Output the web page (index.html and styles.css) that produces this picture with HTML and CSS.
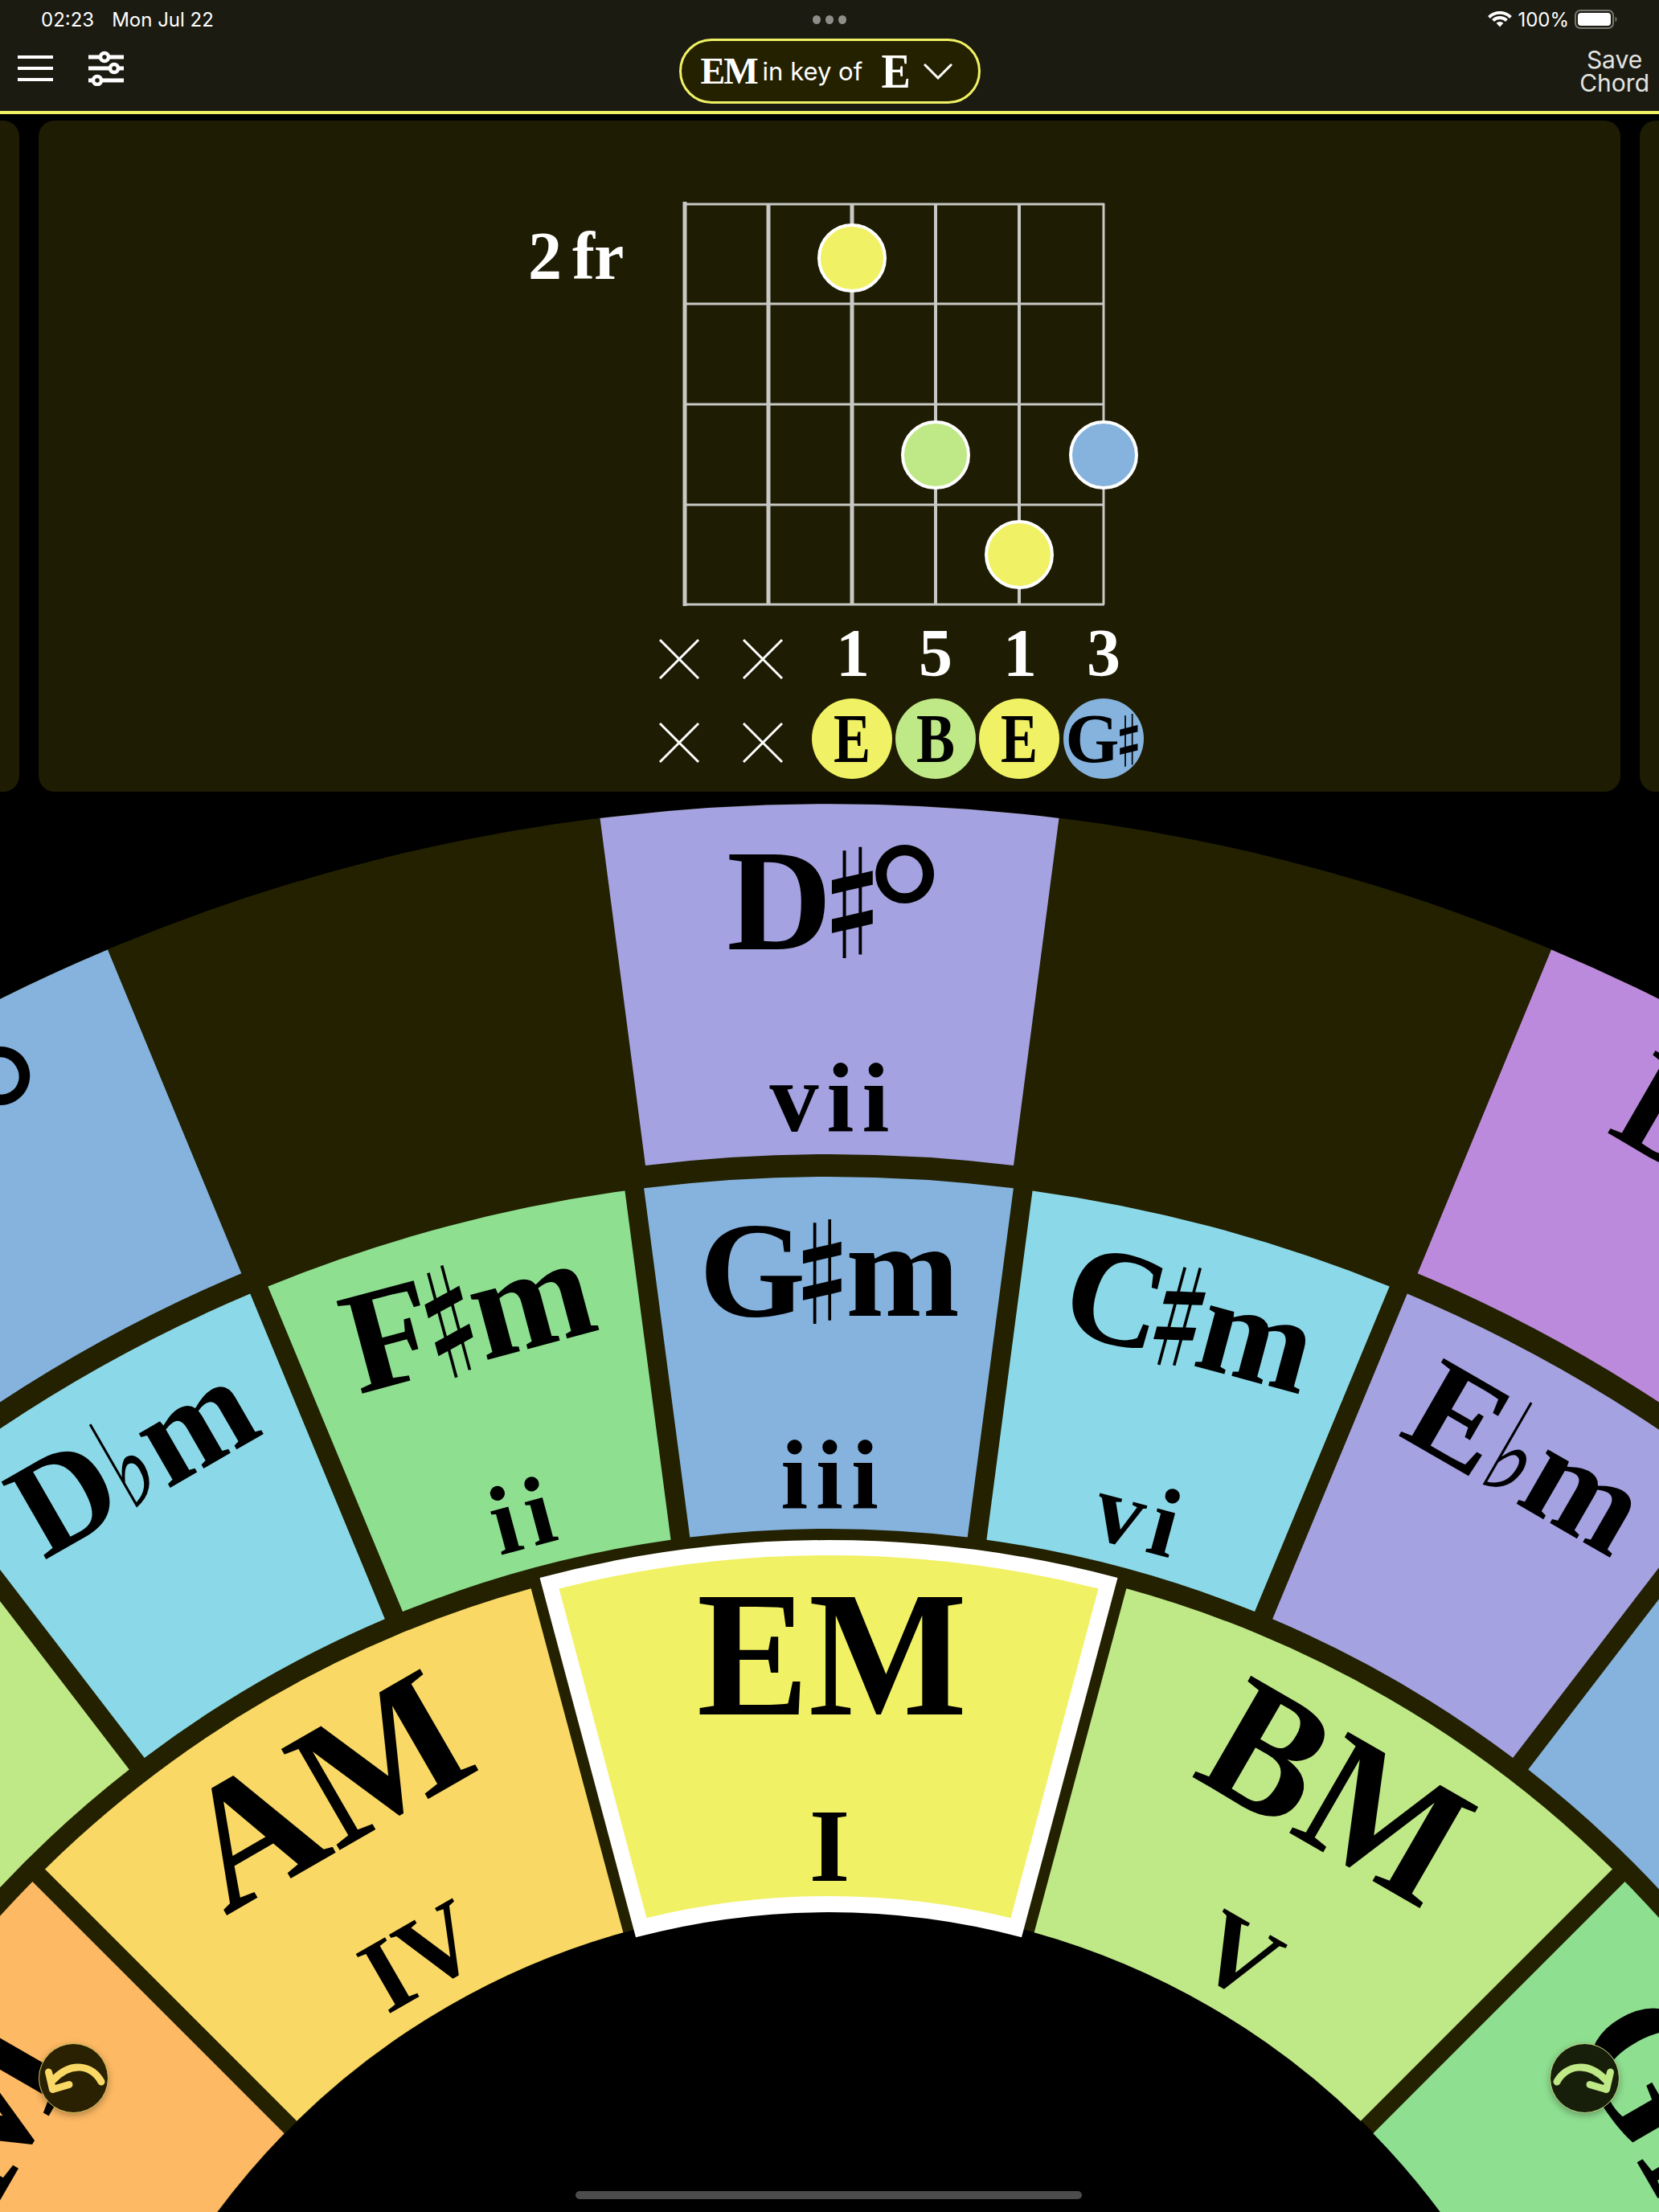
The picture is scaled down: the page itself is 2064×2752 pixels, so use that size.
FILE: index.html
```html
<!DOCTYPE html>
<html lang="en">
<head>
    <meta charset="UTF-8" />
    <meta name="viewport" content="width=device-width, initial-scale=1" />
    <title>Chord Wheel</title>
    <link rel="stylesheet" href="styles.css">
</head>
<body>

<div class="screen">

    <header class="topbar">
        <div class="status">
            <div class="status-left"><span>02:23</span><span>Mon Jul 22</span></div>
            <div class="dots"><i></i><i></i><i></i></div>
            <div class="status-right">
                <svg class="wifi" width="30" height="20" viewBox="0 0 30 20">
                    <path d="M1.5 7.5 A19 19 0 0 1 28.5 7.5" />
                    <path d="M6.5 11.5 A12 12 0 0 1 23.5 11.5" />
                    <path d="M15 19.5 L10.6 14.8 A6 6 0 0 1 19.4 14.8 Z" class="wifi-tip" />
                </svg>
                <span>100%</span>
                <svg class="battery" width="54" height="24" viewBox="0 0 54 24">
                    <rect x="1" y="1" width="47" height="22" rx="6" class="batt-shell" />
                    <rect x="4" y="4" width="41" height="16" rx="4" class="batt-level" />
                    <path d="M50.5 8.5 A4 4 0 0 1 50.5 15.5 Z" class="batt-nub" />
                </svg>
            </div>
        </div>
        <div class="nav">
            <div class="nav-icons">
                <svg width="44" height="44" viewBox="0 0 44 44" class="icon">
                    <path d="M0 8 H44 M0 22 H44 M0 36 H44" />
                </svg>
                <svg width="44" height="44" viewBox="0 0 44 44" class="icon">
                    <path class="thick" d="M0 8 H44 M0 22 H44 M0 37 H44" />
                    <circle cx="20" cy="8" r="5" />
                    <circle cx="32" cy="22" r="5" />
                    <circle cx="11" cy="37" r="5" />
                </svg>
            </div>
            <div class="key-pill">
                <span class="pill-chord">EM</span>
                <span class="pill-label">in key of</span>
                <span class="pill-key">E</span>
                <svg width="36" height="20" viewBox="0 0 36 20" class="pill-arrow">
                    <path d="M1 1 L18 18 L35 1" />
                </svg>
            </div>
            <div class="save">Save<br>Chord</div>
        </div>
    </header>

    <div class="carousel">
        <div class="card"></div>
        <div class="card">
            <svg class="diagram" width="1968" height="835" viewBox="48 150 1968 835">
                <text x="657" y="347" class="fret">2 fr</text>

                <path class="str s1" d="M852 251 V754" />
                <path class="str s1" d="M956 253 V752" />
                <path class="str s1" d="M1060 253 V752" />
                <path class="str s2" d="M1164 253 V752" />
                <path class="str s2" d="M1268 253 V752" />
                <path class="str s3" d="M1373 253 V752" />
                <path class="str s3" d="M850 254 H1374 M850 378 H1374 M850 503 H1374 M850 628 H1374 M850 752 H1374" />

                <circle cx="1060" cy="321" r="41" class="dot yellow" />
                <circle cx="1164" cy="566" r="41" class="dot lime" />
                <circle cx="1373" cy="566" r="41" class="dot blue" />
                <circle cx="1268" cy="690" r="41" class="dot yellow" />

                <path class="mute" d="M821 796 L869 844 M869 796 L821 844" />
                <path class="mute" d="M925 796 L973 844 M973 796 L925 844" />
                <path class="mute" d="M821 900 L869 948 M869 900 L821 948" />
                <path class="mute" d="M925 900 L973 948 M973 900 L925 948" />

                <text x="1061" y="841" class="degree">1</text>
                <text x="1164" y="841" class="degree">5</text>
                <text x="1269" y="841" class="degree">1</text>
                <text x="1373" y="841" class="degree">3</text>

                <circle cx="1060" cy="919" r="50" class="yellow" />
                <circle cx="1164" cy="919" r="50" class="lime" />
                <circle cx="1268" cy="919" r="50" class="yellow" />
                <circle cx="1373" cy="919" r="50" class="blue" />
                <text x="1060" y="948" class="note" textLength="46" lengthAdjust="spacingAndGlyphs">E</text>
                <text x="1164" y="948" class="note" textLength="48" lengthAdjust="spacingAndGlyphs">B</text>
                <text x="1268" y="948" class="note" textLength="46" lengthAdjust="spacingAndGlyphs">E</text>
                <text x="1376" y="948" class="note">G<tspan class="acc" dx="-10" textLength="44" lengthAdjust="spacingAndGlyphs">♯</tspan></text>
            </svg>
        </div>
        <div class="card"></div>
    </div>

    <svg class="wheel" width="2064" height="1767" viewBox="0 985 2064 1767">
        <defs>
            <path id="cell3" d="M-285.5 -2298 A2316 2316 0 0 1 285.5 -2298 L229 -1866 A1880 1880 0 0 0 -229 -1866 Z" />
            <path id="cell2" d="M-229.9 -1837.7 A1852 1852 0 0 1 229.9 -1837.7 L172.7 -1403.4 A1414 1414 0 0 0 -172.7 -1403.4 Z" />
            <path id="cell1" d="M-349.1 -1345.4 A1390 1390 0 0 1 349.1 -1345.4 L234.5 -917.5 A947 947 0 0 0 -234.5 -917.5 Z" />
        </defs>
        <g transform="translate(1032 3316)">
            <circle r="2316" class="ground" />
            <circle r="947" class="hole" />

            <!-- outer ring, every other slot is empty -->
            <use href="#cell3" class="purple" />
            <use href="#cell3" transform="rotate(-29.9)" class="blue" />
            <use href="#cell3" transform="rotate(29.9)" class="pink" />
        </g>
        <g transform="translate(1031 3316)">
            <!-- middle ring -->
            <use href="#cell2" class="blue" />
            <use href="#cell2" transform="rotate(-15)" class="green" />
            <use href="#cell2" transform="rotate(15)" class="cyan" />
            <use href="#cell2" transform="rotate(-30)" class="cyan" />
            <use href="#cell2" transform="rotate(30)" class="purple" />
            <use href="#cell2" transform="rotate(-45)" class="lime" />
            <use href="#cell2" transform="rotate(45)" class="blue" />

            <!-- inner ring -->
            <use href="#cell1" transform="rotate(-30)" class="amber" />
            <use href="#cell1" transform="rotate(30)" class="lime" />
            <use href="#cell1" transform="rotate(-60)" class="orange" />
            <use href="#cell1" transform="rotate(60)" class="green" />

            <!-- selected chord -->
            <path class="white" d="M-359.5 -1353 A1400 1400 0 0 1 359.5 -1353 L240 -905.7 A937 937 0 0 0 -240 -905.7 Z" />
            <path class="yellow" d="M-335.5 -1339.6 A1381 1381 0 0 1 335.5 -1339.6 L226.5 -929.8 A957 957 0 0 0 -226.5 -929.8 Z" />
        </g>
        <g transform="translate(1032 3316)">
            <text x="7" y="-2135" class="dim">D<tspan class="acc" dx="-24" textLength="100" lengthAdjust="spacingAndGlyphs">♯</tspan><tspan class="circ" dx="-33" dy="30">°</tspan></text>
            <text y="-1909" class="num">vii</text>
            <g transform="rotate(-30)"><text x="-70" y="-2135" class="dim">G<tspan class="circ" x="96" dy="30">°</tspan></text></g>
            <g transform="rotate(30)"><text x="17" y="-2135" class="dim">D<tspan class="acc" dx="-24" textLength="100" lengthAdjust="spacingAndGlyphs">♯</tspan><tspan class="circ" dx="-33" dy="30">°</tspan></text></g>

            <text y="-1679" class="minor">G<tspan class="acc" dx="-26" textLength="94" lengthAdjust="spacingAndGlyphs">♯</tspan><tspan dx="-18">m</tspan></text>
            <text y="-1440" class="num">iii</text>
            <g transform="rotate(-15)">
                <text y="-1679" class="minor big">F<tspan class="acc" dx="-26" textLength="94" lengthAdjust="spacingAndGlyphs">♯</tspan><tspan dx="-18">m</tspan></text>
                <text y="-1440" class="num">ii</text>
            </g>
            <g transform="rotate(15)">
                <text y="-1679" class="minor">C<tspan class="acc" dx="-26" textLength="94" lengthAdjust="spacingAndGlyphs">♯</tspan><tspan dx="-18">m</tspan></text>
                <text y="-1440" class="num">vi</text>
            </g>
            <g transform="rotate(-30)"><text y="-1679" class="minor">D<tspan class="flat" textLength="54" lengthAdjust="spacingAndGlyphs">♭</tspan>m</text></g>
            <g transform="rotate(30)"><text y="-1679" class="minor">E<tspan class="flat" textLength="54" lengthAdjust="spacingAndGlyphs">♭</tspan>m</text></g>

            <text y="-1183" class="major">EM</text>
            <text y="-976" class="roman">I</text>
            <g transform="rotate(-30)">
                <text y="-1183" class="major wide">AM</text>
                <text y="-976" class="roman">IV</text>
            </g>
            <g transform="rotate(30)">
                <text y="-1183" class="major">BM</text>
                <text y="-976" class="roman">V</text>
            </g>
            <g transform="rotate(-60)"><text y="-1183" class="major wide">DM</text></g>
            <g transform="rotate(60)"><text x="-25" y="-1183" class="major wide">GM</text></g>
        </g>
    </svg>

    <button class="turn turn-left">
        <svg width="86" height="86" viewBox="0 0 86 86">
            <path d="M77 47 C66 27 40 20 17 45" />
            <path d="M11.5 35 L16.5 56.5 L37 50.5" />
        </svg>
    </button>
    <button class="turn turn-right">
        <svg width="86" height="86" viewBox="0 0 86 86">
            <path d="M8 47 C19 27 46 20 69 45" />
            <path d="M74.5 35 L69.5 56.5 L49 50.5" />
        </svg>
    </button>

    <div class="home-bar"></div>
</div>

</body>
</html>
```

FILE: styles.css
```css
body {
    margin: 0;
    background-color: #000;
}
.screen {
    position: relative;
    width: 2064px;
    height: 2752px;
    overflow: hidden;
    display: flex;
    flex-direction: column;
    background-color: #000;
    font-family: Inter, "Liberation Sans", sans-serif;
    color: #fff;
}

/* top bar */
.topbar {
    box-sizing: border-box;
    height: 142px;
    background-color: #1b1b11;
    border-bottom: 4px solid #f1f165;
}
.status {
    height: 48px;
    padding: 0 51px;
    display: grid;
    grid-template-columns: 1fr auto 1fr;
    align-items: center;
    font-size: 24px;
}
.status-left {
    display: flex;
    gap: 22px;
}
.status-right {
    display: flex;
    justify-content: flex-end;
    align-items: center;
    gap: 7px;
}
.dots {
    display: flex;
    gap: 6px;
}
.dots i {
    width: 10px;
    height: 11px;
    border-radius: 50%;
    background-color: #8e8e88;
}
.wifi path {
    fill: none;
    stroke: #fff;
    stroke-width: 4;
}
.wifi .wifi-tip {
    fill: #fff;
    stroke: none;
}
.batt-shell {
    fill: none;
    stroke: #77776f;
    stroke-width: 2;
}
.batt-level {
    fill: #fff;
}
.batt-nub {
    fill: #77776f;
}
.nav {
    display: grid;
    grid-template-columns: 1fr auto 1fr;
    align-items: start;
}
.nav-icons {
    display: flex;
    gap: 44px;
    padding: 15px 0 0 22px;
}
.icon path {
    stroke: #fff;
    stroke-width: 4;
    fill: none;
}
.icon .thick {
    stroke-width: 5;
}
.icon circle {
    fill: #1b1b11;
    stroke: #fff;
    stroke-width: 4.5;
}
.key-pill {
    box-sizing: border-box;
    width: 375px;
    height: 81px;
    padding-left: 24px;
    display: flex;
    align-items: center;
    background-color: #232100;
    border: 3px solid #f1f165;
    border-radius: 41px;
}
.pill-chord {
    font: bold 46px "Liberation Serif", serif;
    letter-spacing: -2px;
}
.pill-label {
    margin-left: 7px;
    font-size: 31px;
}
.pill-key {
    margin-left: 21px;
    font: bold 62px "Liberation Serif", serif;
    transform: scaleX(.88);
}
.pill-arrow {
    margin-left: 13px;
}
.pill-arrow path {
    fill: none;
    stroke: #fff;
    stroke-width: 3;
}
.save {
    justify-self: end;
    margin: 12px 12px 0 0;
    font-size: 30px;
    line-height: 29px;
    text-align: center;
    color: #e4e4e2;
}

/* chord cards */
.carousel {
    margin-top: 8px;
    height: 835px;
    display: flex;
    justify-content: center;
    gap: 24px;
    overflow: hidden;
}
.card {
    flex: none;
    width: 1968px;
    background-color: #1e1c03;
    border-radius: 20px;
}
.diagram {
    display: block;
}
.diagram text {
    font-family: "Liberation Serif", serif;
    font-weight: bold;
}
.fret {
    font-size: 84px;
    word-spacing: -6px;
    letter-spacing: -1px;
    fill: #fff;
}
.str {
    fill: none;
    stroke: #c8c8c4;
}
.s1 {
    stroke-width: 5;
}
.s2 {
    stroke-width: 4;
}
.s3 {
    stroke-width: 3;
}
.dot {
    stroke: #fff;
    stroke-width: 4;
}
.mute {
    fill: none;
    stroke: #fff;
    stroke-width: 3;
}
.degree {
    font-size: 84px;
    fill: #fff;
    text-anchor: middle;
}
.note {
    font-size: 86px;
    fill: #000;
    text-anchor: middle;
}

/* wheel colours, shared with the diagram */
.yellow { fill: #f1f165; }
.lime { fill: #bfe886; }
.blue { fill: #85b3de; }
.green { fill: #8edf90; }
.cyan { fill: #8bd9e8; }
.purple { fill: #a4a2e0; }
.pink { fill: #bc8adc; }
.amber { fill: #f9d865; }
.orange { fill: #fdb963; }
.white { fill: #fff; }

/* the wheel */
.wheel {
    display: block;
    flex: none;
}
.ground {
    fill: #232100;
}
.hole {
    fill: #000;
}
.wheel text {
    font-family: "Liberation Serif", serif;
    font-weight: bold;
    fill: #000;
    text-anchor: middle;
}
.dim {
    font-size: 181px;
}
.minor {
    font-size: 170px;
}
.minor.big {
    font-size: 182px;
}
.major {
    font-size: 222px;
    transform: translateX(3px) scaleX(.94);
}
.major.wide {
    transform: none;
}
.num {
    font-size: 122px;
    letter-spacing: 10px;
    transform: translateX(5px);
}
.roman {
    font-size: 130px;
}
.acc {
    font-family: "Noto Sans CJK JP", sans-serif;
    font-size: .85em;
}
.flat {
    font-family: "DejaVu Sans", sans-serif;
    font-weight: normal;
    font-size: .95em;
}
.circ {
    font-size: 240px;
}

/* rotate buttons */
.turn {
    position: absolute;
    top: 2542px;
    width: 87px;
    height: 87px;
    padding: 0;
    border: 1.5px solid #d8c860;
    border-radius: 50%;
    box-shadow: 0 3px 8px rgba(0, 0, 0, .3);
}
.turn svg {
    display: block;
}
.turn path {
    fill: none;
    stroke-width: 9;
    stroke-linecap: round;
    stroke-linejoin: round;
}
.turn-left {
    left: 48px;
    background-color: #2a2002;
}
.turn-left path {
    stroke: #f9d865;
}
.turn-right {
    left: 1928px;
    background-color: #171f0a;
    border-color: #c2dc84;
}
.turn-right path {
    stroke: #bfe886;
}

.home-bar {
    position: absolute;
    left: 716px;
    top: 2726px;
    width: 630px;
    height: 10px;
    border-radius: 5px;
    background-color: #4c4c4c;
}
```
